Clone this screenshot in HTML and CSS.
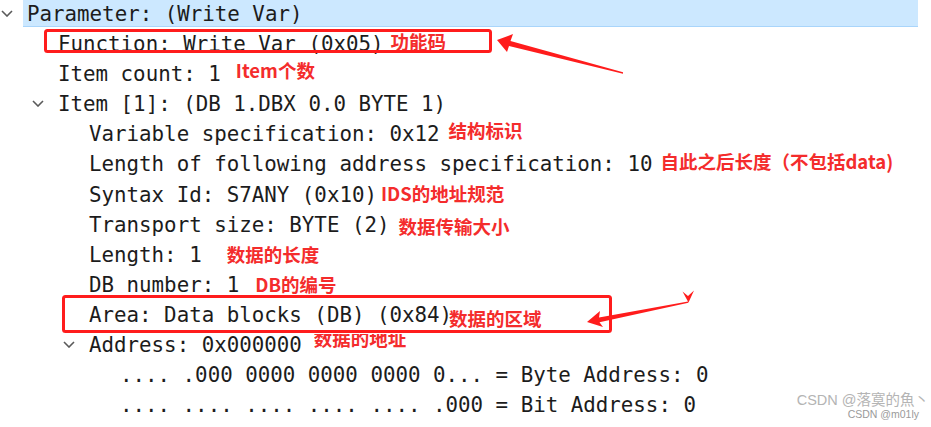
FILE: index.html
```html
<!DOCTYPE html>
<html lang="zh-CN">
<head>
<meta charset="utf-8">
<title>Parameter (Write Var)</title>
<link rel="stylesheet" href="styles.css">
</head>
<body>
<div class="page">
  <div class="tree">
    <div class="row l0 selected">
      <span class="toggle"><svg class="chev" viewBox="0 0 12 7"><path d="M1 1 L6 6 L11 1"/></svg></span>
      <span class="label">Parameter: (Write Var)</span>
    </div>
    <div class="row l1">
      <span class="toggle"></span>
      <span class="label">Function: Write Var (0x05)<span class="note g7 u3">功能码</span></span>
    </div>
    <div class="row l1">
      <span class="toggle"></span>
      <span class="label">Item count: 1<span class="note g15 u4">Item个数</span></span>
    </div>
    <div class="row l1">
      <span class="toggle"><svg class="chev" viewBox="0 0 12 7"><path d="M1 1 L6 6 L11 1"/></svg></span>
      <span class="label">Item [1]: (DB 1.DBX 0.0 BYTE 1)</span>
    </div>
    <div class="row l2">
      <span class="toggle"></span>
      <span class="label">Variable specification: 0x12<span class="note g9 u4">结构标识</span></span>
    </div>
    <div class="row l2">
      <span class="toggle"></span>
      <span class="label">Length of following address specification: 10<span class="note g8 u3">自此之后长度（不包括data)</span></span>
    </div>
    <div class="row l2">
      <span class="toggle"></span>
      <span class="label">Syntax Id: S7ANY (0x10)<span class="note g4 u2">IDS的地址规范</span></span>
    </div>
    <div class="row l2">
      <span class="toggle"></span>
      <span class="label">Transport size: BYTE (2)<span class="note g9 d1">数据传输大小</span></span>
    </div>
    <div class="row l2">
      <span class="toggle"></span>
      <span class="label">Length: 1<span class="note g25 u1">数据的长度</span></span>
    </div>
    <div class="row l2">
      <span class="toggle"></span>
      <span class="label">DB number: 1<span class="note g16 u1">DB的编号</span></span>
    </div>
    <div class="row l2">
      <span class="toggle"></span>
      <span class="label">Area: Data blocks (DB) (0x84)<span class="note gm3 d3">数据的区域</span></span>
    </div>
    <div class="row l2">
      <span class="toggle"><svg class="chev" viewBox="0 0 12 7"><path d="M1 1 L6 6 L11 1"/></svg></span>
      <span class="label">Address: 0x000000<span class="note g12 u7 cut">数据的地址</span></span>
    </div>
    <div class="row l3">
      <span class="toggle"></span>
      <span class="label">.... .000 0000 0000 0000 0... = Byte Address: 0</span>
    </div>
    <div class="row l3">
      <span class="toggle"></span>
      <span class="label">.... .... .... .... .... .000 = Bit Address: 0</span>
    </div>
  </div>

  <svg class="marks" viewBox="0 0 931 427" width="931" height="427">
    <rect x="45.5" y="30.5" width="445" height="21" rx="2" class="box"/>
    <rect x="63.5" y="296.5" width="547" height="35" rx="2" class="box"/>
    <polygon class="arrow" points="497,40 513,34 510.5,41 623,72.3 623,73.7 509,46 507,52"/>
    <polygon class="arrow" points="587,322 600,311 599,317.5 688,301.4 688.4,302.8 599.5,322.2 603,327"/>
    <polygon class="arrow" points="682.5,291.5 688,296 694,290.5 688.5,302.5"/>
  </svg>

  <div class="watermark">
    <span class="wm1">CSDN @落寞的魚丶</span>
    <span class="wm2">CSDN @m01ly</span>
  </div>
</div>
</body>
</html>
```

FILE: styles.css
```css
html, body {
  margin: 0;
  padding: 0;
  background: #ffffff;
}

.page {
  position: relative;
  width: 931px;
  height: 427px;
  overflow: hidden;
}

.tree {
  width: 918px;
  margin-top: -3px;
  font-family: "DejaVu Sans Mono", "Liberation Mono", monospace;
  font-size: 20.8px;
  color: #1c1c1c;
}

.row {
  display: flex;
  align-items: center;
  height: 30.08px;
  line-height: 26px;
  white-space: nowrap;
}

.row.l0 { padding-left: 0; }
.row.l1 { padding-left: 31px; }
.row.l2 { padding-left: 62px; }
.row.l3 { padding-left: 93px; }

.toggle {
  flex: 0 0 23px;
  width: 23px;
  height: 30px;
  display: flex;
  align-items: center;
}

.chev {
  width: 12px;
  height: 7px;
  margin-left: 1px;
  margin-top: 3px;
}

.chev path {
  fill: none;
  stroke: #5a5a5a;
  stroke-width: 1.6;
}

.label {
  flex: 1 1 auto;
  box-sizing: border-box;
  padding-left: 4px;
  padding-top: 4px;
  height: 30px;
  display: flex;
  align-items: center;
}

.row.selected .label {
  background: #cce8ff;
  box-shadow: inset 0 -1px 0 #a9d5fb;
}

.note {
  font-family: "Noto Sans CJK SC", "Noto Sans", sans-serif;
  font-weight: 700;
  font-size: 18.5px;
  color: #f42c2c;
  line-height: 20px;
  display: inline-block;
}

.g4 { margin-left: 4px; }
.g7 { margin-left: 7px; }
.g8 { margin-left: 8px; }
.g9 { margin-left: 9px; }
.g12 { margin-left: 12px; }
.g15 { margin-left: 15px; }
.g16 { margin-left: 16px; }
.g25 { margin-left: 25px; }
.gm3 { margin-left: -3px; }

.u1 { transform: translateY(-1px); }
.u2 { transform: translateY(-2px); }
.u3 { transform: translateY(-3px); }
.u4 { transform: translateY(-4px); }
.u7 { transform: translateY(-7px); }
.d1 { transform: translateY(1px); }
.d3 { transform: translateY(3px); }
.cut { clip-path: inset(6px 0 0 0); }

.marks {
  position: absolute;
  left: 0;
  top: 0;
  pointer-events: none;
}

.box {
  fill: none;
  stroke: #ff1c1c;
  stroke-width: 3;
}

.arrow {
  fill: #ff1c1c;
}

.watermark {
  position: absolute;
  right: 2px;
  top: 393px;
  display: flex;
  flex-direction: column;
  align-items: flex-end;
  font-family: "Liberation Sans", "Noto Sans CJK SC", sans-serif;
  color: #b4b4b4;
  line-height: 1;
}

.wm1 {
  font-size: 14.5px;
}

.wm2 {
  font-size: 10.5px;
  margin-right: 10px;
  margin-top: 1px;
  color: #9a9a9a;
}
```
